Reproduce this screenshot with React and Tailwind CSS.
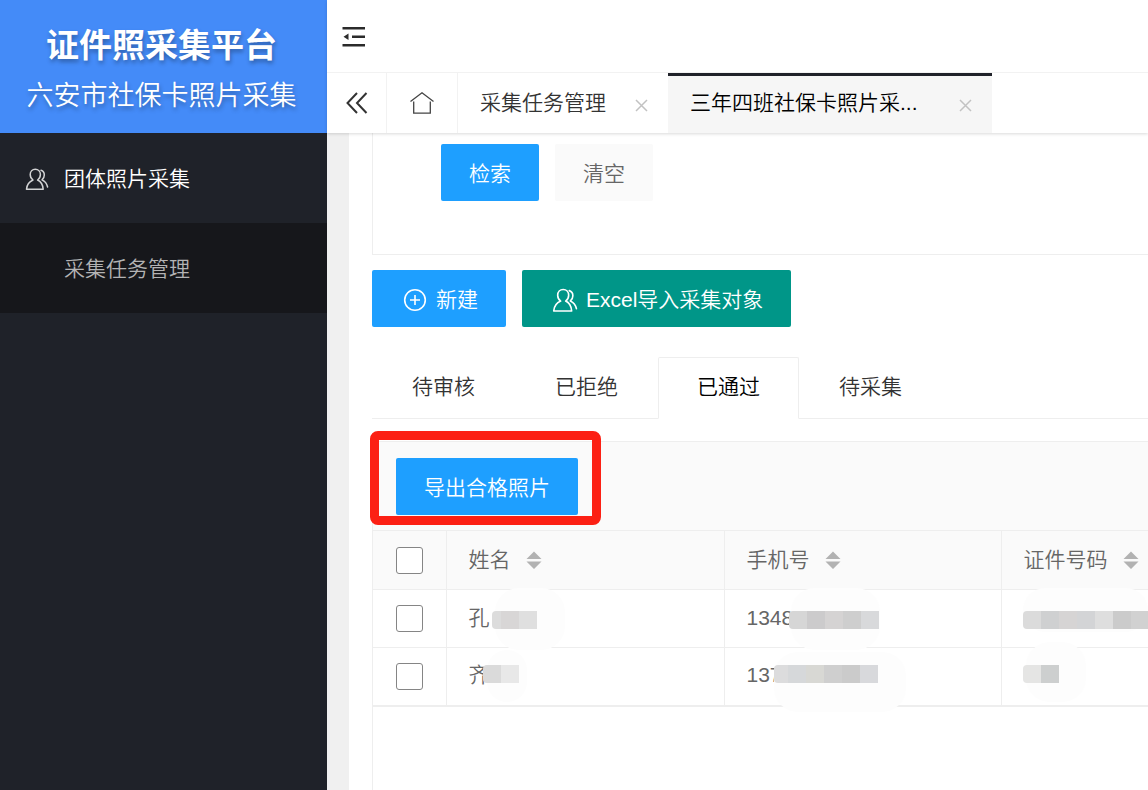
import { useState } from "react";

const statusTabs = ["待审核", "已拒绝", "已通过", "待采集"];

const columns = [
  { key: "name", title: "姓名", width: "w-[278px]" },
  { key: "phone", title: "手机号", width: "w-[277px]" },
  { key: "idCard", title: "证件号码", width: "" },
];

// mask: colour of every 18px block that hides the rest of the value
// smear: soft white patch behind the blocks
const rows = [
  {
    id: 1,
    name: {
      text: "孔",
      left: 45,
      top: 21,
      first: 9,
      mask: ["#dcdcdc", "#d8d6d6", "#dfdfdf"],
      smear: { left: 48, top: -2, width: 70, height: 62 },
    },
    phone: {
      text: "1348",
      left: 64,
      top: 21,
      first: 18,
      mask: ["#d6d6d6", "#cccbcc", "#d5d3d3", "#cecece", "#d8d9db"],
      smear: { left: 66, top: -2, width: 89, height: 62 },
    },
    idCard: {
      text: "",
      left: 21,
      top: 21,
      first: 18,
      mask: ["#dbdbdb", "#cfd0d1", "#d6d4d4", "#d3d4d6", "#dedede", "#cbcbcb", "#d1d1d1"],
      smear: { left: 21, top: -2, width: 125, height: 44 },
    },
  },
  {
    id: 2,
    name: {
      text: "齐",
      left: 36,
      top: 17,
      first: 18,
      mask: ["#dadada", "#e8e8e8"],
      smear: { left: 40, top: 2, width: 40, height: 52 },
    },
    phone: {
      text: "137",
      left: 49,
      top: 17,
      first: 14,
      mask: ["#dcdcdd", "#d6d8da", "#d8d8d4", "#cfcfcf", "#cbcbcb", "#d8d9dc"],
      smear: { left: 49, top: 4, width: 132, height: 60 },
    },
    idCard: {
      text: "",
      left: 21,
      top: 17,
      first: 18,
      mask: ["#e5e5e4", "#cdcfcf"],
      smear: { left: 24, top: -6, width: 60, height: 60 },
    },
  },
];

function UserIcon({ className }) {
  return (
    <svg viewBox="0 0 26 26" fill="none" stroke="currentColor" strokeWidth="1.5" strokeLinejoin="round" className={className}>
      <path d="M9 14C7.300 12.800 6.200 10.800 6.200 8.600 6.200 5.400 8.400 3.200 11.300 3.200s5.100 2.200 5.100 5.400c0 2.200-1.100 4.200-2.800 5.400 3.400 1.500 5.200 4.600 5.600 9.200H2.500C2.900 18.600 5.600 15.500 9 14Z" />
      <path d="M17 4.300c2.300.8 3.300 2.600 3.300 4.700 0 2-.8 3.700-2.300 4.900 3.200 1.500 4.900 3.900 5.600 7.100" strokeLinecap="round" />
    </svg>
  );
}

function CloseIcon() {
  return (
    <svg viewBox="0 0 13 13" fill="none" stroke="#c2c2c2" strokeWidth="1.5" className="size-[13px]">
      <path d="M1 1l11 11M12 1L1 12" />
    </svg>
  );
}

function SortIcon() {
  return (
    <svg viewBox="0 0 16 18" fill="#b2b2b2" className="w-4 h-[18px]">
      <path d="M8 .5l7.500 7.500H.5zM.5 10.500h15L8 18z" />
    </svg>
  );
}

function Mosaic({ cell }) {
  const width = cell.first + (cell.mask.length - 1) * 18;
  return (
    <span aria-hidden="true">
      <span className="absolute rounded-[24px] bg-[#fdfdfd]" style={cell.smear} />
      <span className="absolute flex overflow-hidden rounded-l-sm" style={{ left: cell.left, top: cell.top, width }}>
        {cell.mask.map((color, i) => (
          <span key={i} className="h-[18px] shrink-0" style={{ background: color, width: i === 0 ? cell.first : 18 }} />
        ))}
      </span>
    </span>
  );
}

function Checkbox({ label }) {
  return (
    <input
      type="checkbox"
      aria-label={label}
      className="block size-[27px] mx-auto appearance-none rounded-[3px] border border-[#858585] bg-white checked:bg-[#1e9fff]"
    />
  );
}

function Sidebar() {
  return (
    <aside className="w-[327px] shrink-0 bg-[#1f2229] text-white">
      <div className="h-[133px] pt-[21px] pr-1 text-center bg-[#448bf8] [text-shadow:1px_3px_4px_rgba(0,0,0,0.3)]">
        <h1 className="text-[33px] leading-[50px] font-bold">证件照采集平台</h1>
        <p className="text-[27px] leading-[50px]">六安市社保卡照片采集</p>
      </div>
      <nav>
        <a href="#group" className="flex items-center h-[90px] pt-[2px] pl-6">
          <UserIcon className="size-[26px] mr-[14px] text-[#d2d3d4]" />
          团体照片采集
        </a>
        <a href="#tasks" className="flex items-center h-[90px] pt-[2px] pl-16 bg-[#16171b] text-[#b3b3b4]">
          采集任务管理
        </a>
      </nav>
    </aside>
  );
}

function TopBar() {
  return (
    <header className="relative z-10 bg-white shadow-[0_1px_3px_rgba(0,0,0,0.15)]">
      <div className="flex items-center h-[73px] pt-[2px] pl-[14px] border-b border-[#f2f2f2]">
        <button type="button" aria-label="收起菜单">
          <svg viewBox="0 0 26 24" fill="#2b2b2b" className="w-[26px] h-6">
            <path d="M1.500 2h22.500v2.500H1.500zM11 10.500h13V13H11zM1.500 19h22.500v2.500H1.500zM2.500 11.700L7.500 8.500v6.500z" />
          </svg>
        </button>
      </div>
      <div className="flex h-[60px]">
        <button type="button" aria-label="向左" className="flex items-center justify-center w-[60px] border-r border-[#f2f2f2]">
          <svg viewBox="0 0 22 22" fill="none" stroke="#333" strokeWidth="2" className="size-[22px]">
            <path d="M11 1L1.500 11 11 21M20.500 1L11 11l9.500 10" />
          </svg>
        </button>
        <a href="#home" aria-label="首页" className="flex items-center justify-center w-[71px] border-r border-[#f2f2f2]">
          <svg viewBox="0 0 24 22" fill="none" stroke="#444" strokeWidth="1.300" className="w-6 h-[22px]">
            <path d="M.5 9.500L12 .8l11.500 8.700M3.700 9.500v11.700h16.600V9.500" />
          </svg>
        </a>
        <div className="flex items-center justify-between w-[210px] pl-[22px] pr-5">
          <a href="#tasks">采集任务管理</a>
          <button type="button" aria-label="关闭" className="pt-1"><CloseIcon /></button>
        </div>
        <div className="flex items-center justify-between w-[324px] pb-[3px] pl-[22px] pr-5 bg-[#f6f6f6] text-black border-t-3 border-[#20222a]">
          <a href="#class">三年四班社保卡照片采...</a>
          <button type="button" aria-label="关闭" className="pt-1"><CloseIcon /></button>
        </div>
      </div>
    </header>
  );
}

export default function App() {
  const [active, setActive] = useState(2);

  return (
    <div className="flex min-h-screen bg-[#f0f0f0] text-[21px] leading-[30px] text-[#333] font-[350] whitespace-nowrap font-['Liberation_Sans','Noto_Sans_CJK_SC',sans-serif]">
      <Sidebar />
      <div className="flex flex-col flex-1 min-w-0">
        <TopBar />
        <main className="flex flex-col flex-1 ml-[22px] pl-[23px] bg-white">
          <form className="flex gap-4 h-[122px] pt-[11px] pl-[68px] border-l border-b border-[#eee]" onSubmit={(e) => e.preventDefault()}>
            <button type="submit" className="h-[57px] pt-[2px] px-7 rounded-xs bg-[#1e9fff] text-white">检索</button>
            <button type="reset" className="h-[57px] pt-[2px] px-7 rounded-xs bg-[#fafafa] text-[#666]">清空</button>
          </form>

          <div className="flex gap-4 mt-[15px]">
            <button type="button" className="flex items-center gap-[6px] h-[57px] pt-[2px] px-7 rounded-xs bg-[#1e9fff] text-white">
              <svg viewBox="0 0 30 30" fill="none" stroke="currentColor" strokeWidth="1.600" className="size-[30px]">
                <circle cx="15" cy="15" r="10.300" />
                <path d="M15 10v10M10 15h10" />
              </svg>
              新建
            </button>
            <button type="button" className="flex items-center gap-[6px] h-[57px] pt-[2px] px-7 rounded-xs bg-[#009688] text-white">
              <UserIcon className="size-[28px] mx-px" />
              Excel导入采集对象
            </button>
          </div>

          <div className="flex mt-[30px] h-[62px] border-b border-[#eee]" role="tablist">
            {statusTabs.map((tab, i) => (
              <button
                key={tab}
                type="button"
                role="tab"
                aria-selected={i === active}
                onClick={() => setActive(i)}
                className={
                  i === active
                    ? "h-[62px] pb-[2px] px-[38px] border border-b-white border-[#eee] rounded-t-xs bg-white text-black"
                    : "h-[62px] pb-[2px] px-10"
                }
              >
                {tab}
              </button>
            ))}
          </div>

          <section className="flex-1 mt-[22px] border-l border-t border-[#eee]">
            <div className="flex h-[88px] pt-4 pl-[23px] bg-[#fafafa]">
              <div className="relative h-[57px]">
                <button type="button" className="h-[57px] pt-[2px] px-7 rounded-xs bg-[#1e9fff] text-white">导出合格照片</button>
                <div className="absolute -top-[27px] -left-[26px] -right-[23px] -bottom-[10px] border-9 border-[#fc2014] rounded-lg pointer-events-none" />
              </div>
            </div>
            <table className="w-full table-fixed border-collapse text-left text-[#666] border-b-2 border-[#eee]">
              <thead>
                <tr className="h-[59px] bg-[#fafafa]">
                  <th className="w-[73px] border border-l-0 border-[#eee]"><Checkbox label="全选" /></th>
                  {columns.map((col) => (
                    <th key={col.key} className={`${col.width} pl-[22px] border border-r-0 border-[#eee] font-[350]`}>
                      <div className="flex items-center gap-[15px]">
                        {col.title}
                        <SortIcon />
                      </div>
                    </th>
                  ))}
                </tr>
              </thead>
              <tbody>
                {rows.map((row) => (
                  <tr key={row.id} className="h-[58px]">
                    <td className="border border-l-0 border-[#eee]"><Checkbox label={row.name.text} /></td>
                    {columns.map((col) => (
                      <td key={col.key} className="relative pb-[2px] pl-[22px] border border-r-0 border-[#eee]">
                        {row[col.key].text}
                        <Mosaic cell={row[col.key]} />
                      </td>
                    ))}
                  </tr>
                ))}
              </tbody>
            </table>
          </section>
        </main>
      </div>
    </div>
  );
}
